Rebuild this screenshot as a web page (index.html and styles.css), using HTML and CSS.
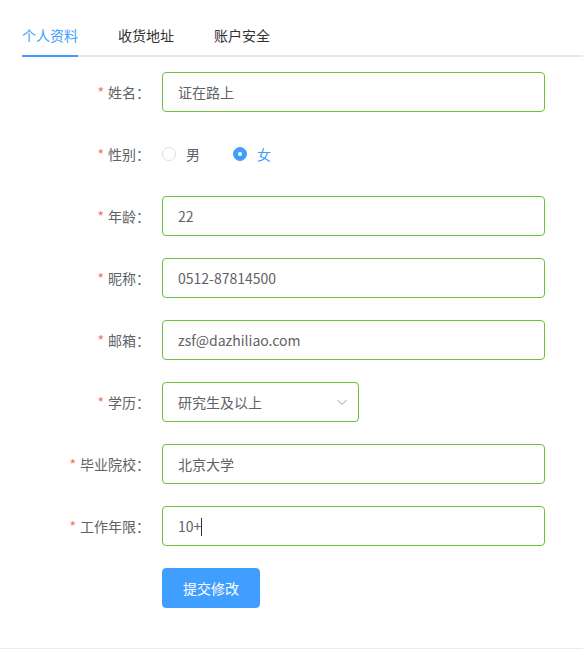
FILE: index.html
```html
<!DOCTYPE html>
<html lang="zh-CN">

<head>
  <meta charset="UTF-8">
  <meta name="viewport" content="width=device-width, initial-scale=1.0">
  <title>个人资料</title>
  <link rel="stylesheet" href="styles.css">
</head>

<body>
  <div class="page">
    <!-- 标签页 -->
    <div class="tabs">
      <div class="tab active">个人资料</div>
      <div class="tab">收货地址</div>
      <div class="tab">账户安全</div>
    </div>

    <form class="form" onsubmit="event.preventDefault();">
      <div class="form-item">
        <label class="label"><span class="req">*</span>姓名：</label>
        <div class="field"><input class="input" type="text" value="证在路上"></div>
      </div>

      <div class="form-item">
        <label class="label"><span class="req">*</span>性别：</label>
        <div class="field radios">
          <label class="radio"><span class="radio-dot"></span><span class="radio-text">男</span></label>
          <label class="radio checked"><span class="radio-dot"></span><span class="radio-text">女</span></label>
        </div>
      </div>

      <div class="form-item">
        <label class="label"><span class="req">*</span>年龄：</label>
        <div class="field"><input class="input" type="text" value="22"></div>
      </div>

      <div class="form-item">
        <label class="label"><span class="req">*</span>昵称：</label>
        <div class="field"><input class="input" type="text" value="0512-87814500"></div>
      </div>

      <div class="form-item">
        <label class="label"><span class="req">*</span>邮箱：</label>
        <div class="field"><input class="input" type="text" value="zsf@dazhiliao.com"></div>
      </div>

      <div class="form-item">
        <label class="label"><span class="req">*</span>学历：</label>
        <div class="field">
          <div class="select">
            <span>研究生及以上</span>
            <svg class="arrow" width="12" height="12" viewBox="0 0 12 12">
              <path d="M1.5 4 L6 8.5 L10.5 4" fill="none" stroke="#c0c4cc" stroke-width="1.1"/>
            </svg>
          </div>
        </div>
      </div>

      <div class="form-item">
        <label class="label"><span class="req">*</span>毕业院校：</label>
        <div class="field"><input class="input" type="text" value="北京大学"></div>
      </div>

      <div class="form-item">
        <label class="label"><span class="req">*</span>工作年限：</label>
        <div class="field"><div class="input focus">10+<span class="caret"></span></div></div>
      </div>

      <div class="form-item">
        <div class="label"></div>
        <div class="field"><button type="submit" class="btn">提交修改</button></div>
      </div>
    </form>
  </div>
</body>

</html>
```

FILE: styles.css
```css
body {
  margin: 0;
  font-family: "Microsoft YaHei", "Noto Sans CJK SC", sans-serif;
  font-size: 14px;
  color: #606266;
  background: #fff;
}

.page {
  padding: 15px 0 0 22px;
  height: 633px;
  border-bottom: 1px solid #e4ebf5;
}

.tabs {
  display: flex;
  height: 40px;
  border-bottom: 2px solid #e4e7ed;
  margin-bottom: 15px;
}

.tab {
  line-height: 40px;
  margin-right: 40px;
  color: #303133;
  font-size: 14px;
}

.tab.active {
  color: #409eff;
  box-shadow: inset 0 -2px 0 #409eff;
  margin-bottom: -2px;
}

.form-item {
  display: flex;
  align-items: center;
  height: 40px;
  margin-bottom: 22px;
}

.label {
  width: 140px;
  box-sizing: border-box;
  padding-right: 12px;
  text-align: right;
  color: #606266;
}

.req {
  color: #f56c6c;
  margin-right: 4px;
}

.field {
  flex: none;
  width: 383px;
}

.input {
  display: block;
  width: 100%;
  box-sizing: border-box;
  height: 40px;
  line-height: 38px;
  padding: 0 15px;
  border: 1px solid #67c23a;
  border-radius: 4px;
  font-family: inherit;
  font-size: 14px;
  color: #606266;
  outline: none;
}

.caret {
  display: inline-block;
  width: 1px;
  height: 18px;
  background: #303133;
  vertical-align: -4px;
}

.radios {
  display: flex;
  align-items: center;
}

.radio {
  display: flex;
  align-items: center;
  margin-right: 33px;
  color: #606266;
}

.radio-dot {
  width: 12px;
  height: 12px;
  border: 1px solid #dcdfe6;
  border-radius: 50%;
  box-sizing: content-box;
  margin-right: 10px;
  position: relative;
}

.radio.checked .radio-dot {
  background: #409eff;
  border-color: #409eff;
}

.radio.checked .radio-dot::after {
  content: "";
  position: absolute;
  left: 4px;
  top: 4px;
  width: 4px;
  height: 4px;
  border-radius: 50%;
  background: #fff;
}

.radio.checked .radio-text {
  color: #409eff;
}

.select {
  width: 197px;
  height: 40px;
  box-sizing: border-box;
  border: 1px solid #67c23a;
  border-radius: 4px;
  padding: 0 10px 0 15px;
  display: flex;
  align-items: center;
  justify-content: space-between;
}

.btn {
  height: 40px;
  padding: 0 20px;
  background: #409eff;
  border: 1px solid #409eff;
  border-radius: 4px;
  color: #fff;
  font-family: inherit;
  font-size: 14px;
  cursor: pointer;
}
```
